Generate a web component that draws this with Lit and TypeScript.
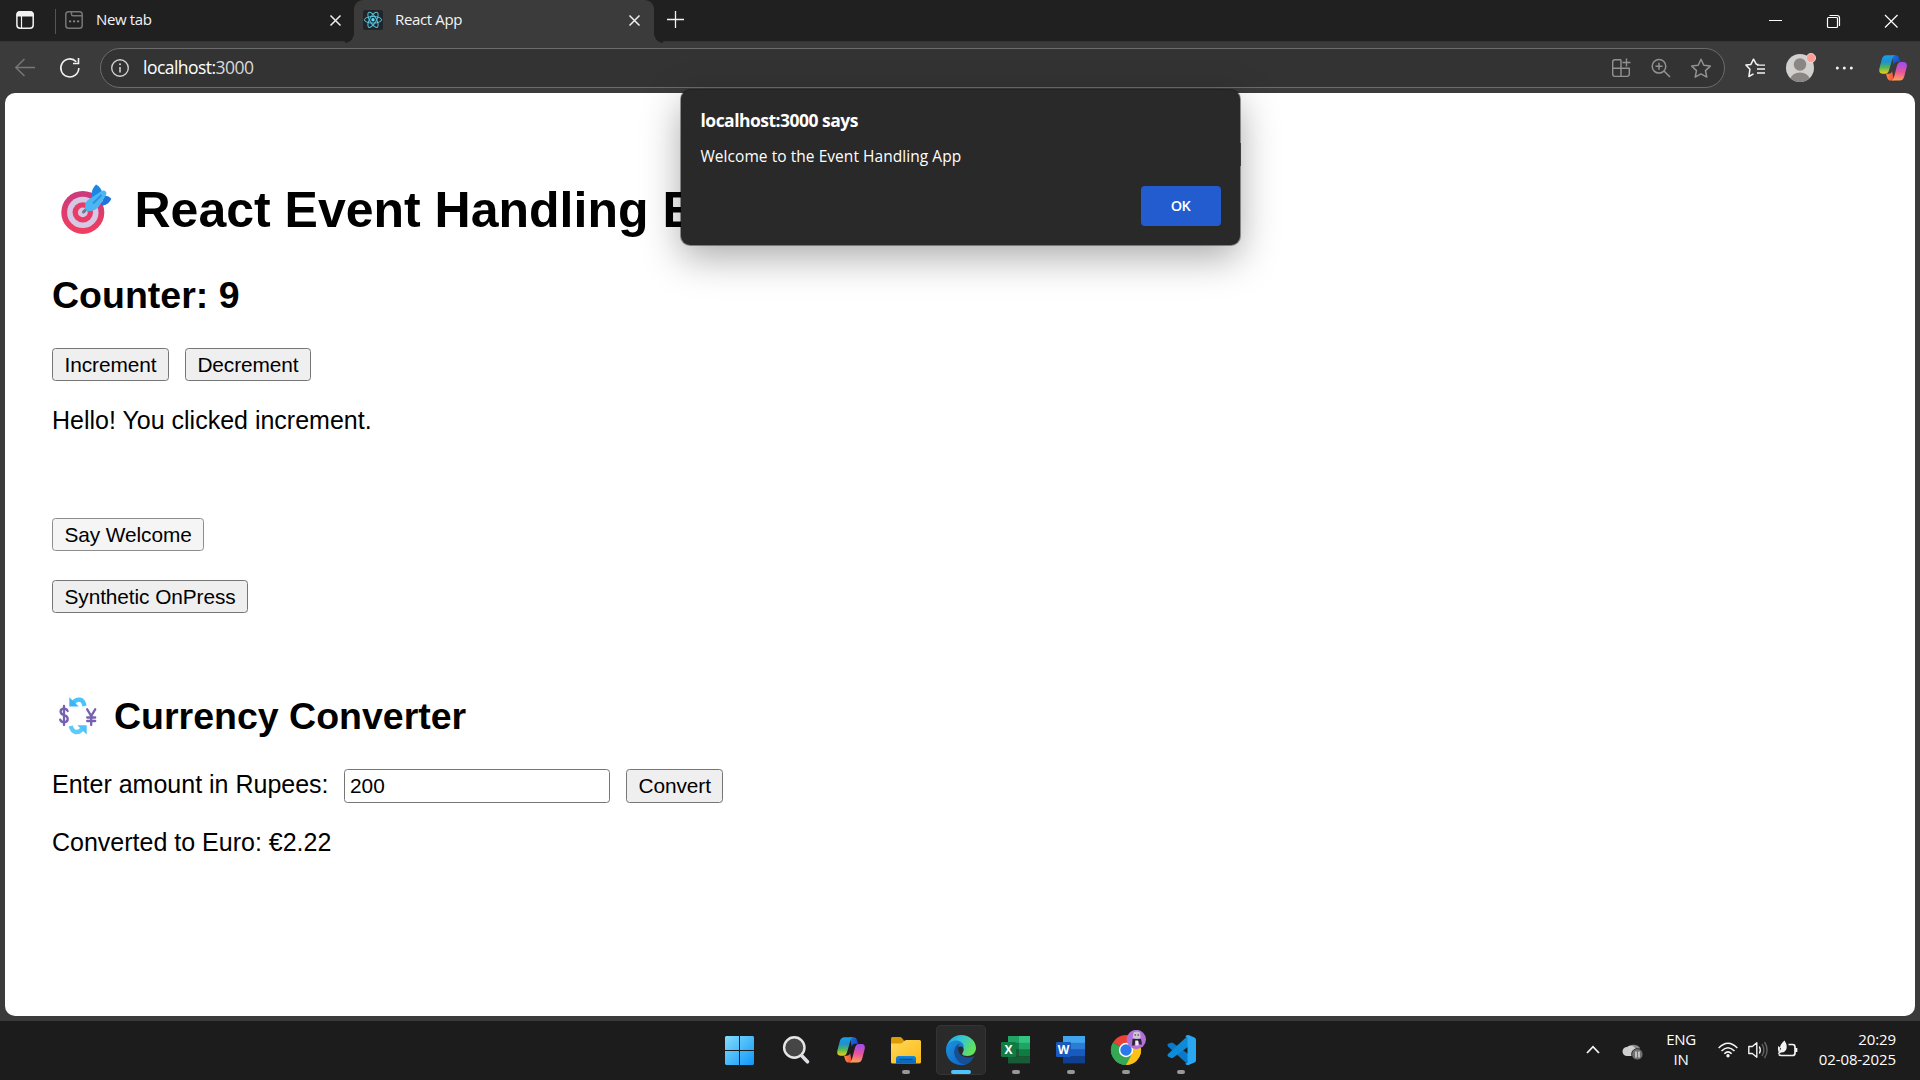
import { LitElement, html, svg, css } from "lit";
import { customElement, state } from "lit/decorators.js";

type Box = [number, number, number, number];

/* Icons are drawn in window coordinates; the box is the part of the window they cover. */
const icon = (b: Box, body: unknown, cls = "") =>
  html`<svg class="ico ${cls}" width=${b[2]} height=${b[3]} viewBox=${b.join(" ")} fill="none">${body}</svg>`;

/* Ribbon mark in a 28x26 box. */
const copilot = (id: string) => svg`
  <defs>
    <linearGradient id="${id}a" x1="0" y1="0" x2="0" y2="1"><stop offset="0" stop-color="#1a9fe8"/><stop offset=".35" stop-color="#1f8fd0"/><stop offset=".65" stop-color="#4fb75c"/><stop offset="1" stop-color="#f5cc16"/></linearGradient>
    <linearGradient id="${id}b" x1=".3" y1="0" x2=".2" y2="1"><stop offset="0" stop-color="#a04df0"/><stop offset=".5" stop-color="#e8549a"/><stop offset="1" stop-color="#ffa552"/></linearGradient>
    <linearGradient id="${id}c" x1="0" y1="0" x2="1" y2="1"><stop offset="0" stop-color="#1a74dd"/><stop offset="1" stop-color="#1b3fc4"/></linearGradient>
    <linearGradient id="${id}d" x1="0" y1="0" x2="1" y2="0"><stop offset="0" stop-color="#ff8a3c"/><stop offset="1" stop-color="#ee4c42"/></linearGradient>
  </defs>
  <path fill="url(#${id}c)" d="M13 .3h3.4c2.2 0 3 1 3.7 3.1l1 3.4h-2.8c-2 0-3 1-3.6 3z"/>
  <path fill="url(#${id}d)" d="M15 25.6h-3c-2.400 0-3.300-1.200-3.900-3.200L7 18.800h2.600c2 0 3-1 3.500-2.800z"/>
  <path fill="url(#${id}a)" d="M7.600.3h8.600c-1.600.2-2.300 1.700-2.900 3.600l-3.200 11.200c-.8 2.700-1.800 3.700-4 3.700H3.800C.8 18.800-.3 16.800.4 13.600L2.600 5C3.500 1.800 4.800.3 7.600.3z"/>
  <path fill="url(#${id}b)" d="M20.500 25.600h-8.300c1.600-.2 2.200-1.700 2.800-3.600l3-11.200c.8-2.700 1.700-3.900 3.900-3.900h2.400c3 0 4.100 2 3.400 5.100l-2.300 9c-.8 3.100-2.100 4.600-4.900 4.600z"/>`;

@customElement("browser-tabs")
export class BrowserTabs extends LitElement {
  static styles = css`
    :host { display: flex; height: 42px; background: #202020; border-bottom: 1px solid #343434; box-sizing: border-box; color: #f4f4f4; font: 15px/20px "Open Sans", "Noto Sans", sans-serif; }
    .ico { display: block; flex: none; }
    .lead { display: flex; align-items: flex-start; padding: 9px 0 0 14px; width: 55px; box-sizing: border-box; }
    .divider { width: 1px; height: 25px; margin-top: 9px; background: #555; flex: none; }
    .tab { display: flex; align-items: flex-start; box-sizing: border-box; padding-top: 9px; height: 43px; }
    .idle { width: 298px; padding-left: 8px; }
    .active { width: 300px; padding-left: 8px; background: #3b3b3b; border-radius: 9px 9px 0 0; position: relative; }
    .active::before, .active::after { content: ""; position: absolute; bottom: 0; width: 9px; height: 9px; }
    .active::before { left: -9px; background: radial-gradient(circle at 0 0, #202020 8.5px, #3b3b3b 9px); }
    .active::after { right: -9px; background: radial-gradient(circle at 100% 0, #202020 8.5px, #3b3b3b 9px); }
    .label { flex: 1; padding-left: 12px; letter-spacing: -0.35px; white-space: nowrap; }
    .active .label { padding-left: 11px; }
    .controls { display: flex; margin-left: auto; padding: 13px 20px 0 0; gap: 42px; }
    .x { margin: 5px 12px 0 0; }
    .active .x { margin-right: 13px; }
    .plus { margin: 10px 0 0 12px; }
  `;
  render() {
    const x = svg`<path d="M1.500 1.500l10 10M11.500 1.500l-10 10" stroke="#f0f0f0" stroke-width="1.500"/>`;
    return html`
      <div class="lead">${icon([14, 9, 22, 22], svg`
        <rect x="16.900" y="11.800" width="16.300" height="16.400" rx="3.200" stroke="#f2f2f2" stroke-width="1.500"/>
        <path d="M16.500 16.500v-1.600a3.600 3.600 0 0 1 3.600-3.600h10a3.600 3.600 0 0 1 3.600 3.600v1.600z" fill="#f2f2f2"/><path d="M21.500 16v12" stroke="#f2f2f2" stroke-width="1.200"/>`)}</div>
      <div class="divider"></div>
      <div class="tab idle">
        ${icon([64, 9, 20, 22], svg`<g stroke="#777" stroke-width="1.500"><rect x="65.800" y="11.800" width="16.400" height="16.400" rx="2.800"/><path d="M71.500 12v2.200q0 1.600 1.600 1.600H82"/></g><path d="M69 20.500h2.200v1.800H69zM73 20.500h2.200v1.800H73zM77 20.500h2.200v1.800H77z" fill="#888"/>`)}
        <span class="label">New tab</span>
        ${icon([0, 0, 13, 13], x, "x")}
      </div>
      <div class="tab active">
        ${icon([362, 9, 22, 22], svg`<rect x="363" y="10" width="20" height="20" rx="2" fill="#20252a"/>
          <g stroke="#58c4dc" stroke-width="1"><ellipse cx="373" cy="19.800" rx="8.600" ry="3.300"/><ellipse cx="373" cy="19.800" rx="8.600" ry="3.300" transform="rotate(60 373 19.800)"/><ellipse cx="373" cy="19.800" rx="8.600" ry="3.300" transform="rotate(120 373 19.800)"/></g><circle cx="373" cy="19.800" r="1.700" fill="#61dafb"/>`)}
        <span class="label">React App</span>
        ${icon([0, 0, 13, 13], x, "x")}
      </div>
      ${icon([666, 10, 20, 20], svg`<path d="M667 19.500h17M675.500 11v17" stroke="#f2f2f2" stroke-width="1.300"/>`, "plus")}
      <div class="controls">
        ${icon([1768, 13, 16, 17], svg`<path d="M1769 20.500h13" stroke="#fff"/>`)}
        ${icon([1826, 13, 16, 17], svg`<g stroke="#fff" stroke-width="1.200"><rect x="1827.500" y="17.500" width="10" height="10" rx="1"/><path d="M1829.500 15.500h7.500q2.500 0 2.500 2.500v8"/></g>`)}
        ${icon([1884, 13, 16, 17], svg`<path d="M1885 15l12.500 12.500M1897.500 15L1885 27.500" stroke="#fff" stroke-width="1.200"/>`)}
      </div>`;
  }
}

@customElement("browser-toolbar")
export class BrowserToolbar extends LitElement {
  static styles = css`
    :host { display: flex; align-items: center; height: 51px; box-sizing: border-box; background: #3b3b3b; padding: 0 13px 0 14px; }
    .ico { display: block; flex: none; }
    .reload { margin-left: 22px; }
    .address { display: flex; align-items: center; box-sizing: border-box; width: 1625px; height: 40px; margin-left: 18px; padding: 0 12px 0 9px; background: #333; border: 1px solid #6c6c6c; border-radius: 20px; flex: none; }
    .url { flex: 1; padding: 0 0 1px 13px; color: #fff; font: 17.5px/24px "Open Sans", "Noto Sans", sans-serif; letter-spacing: -0.53px; }
    .port { color: #d8d8d8; }
    .actions { display: flex; gap: 18px; }
    .tools { display: flex; align-items: center; margin-left: auto; }
    .me { margin-left: 17px; }
    .more { margin-left: 18px; }
    .mark { margin-left: 24px; }
  `;
  render() {
    const star = "l2.800 6 6.500.8-4.800 4.500 1.300 6.500-5.800-3.200-5.800 3.200 1.300-6.500-4.800-4.500 6.500-.8z";
    return html`
      ${icon([14, 58, 22, 20], svg`<path d="M35 67.500H16M24.500 59l-8.700 8.500 8.700 8.500" stroke="#777" stroke-width="1.500"/>`)}
      ${icon([58, 57, 24, 22], svg`<path d="M78.800 68a9 9 0 1 1-2.500-6.300M78.500 58v5.500H73" stroke="#f2f2f2" stroke-width="1.600"/>`, "reload")}
      <div class="address">
        ${icon([110, 58, 20, 20], svg`<circle cx="120" cy="68" r="8.300" stroke="#cfcfcf" stroke-width="1.400"/><path d="M120 67v5.500" stroke="#cfcfcf" stroke-width="1.600"/><circle cx="120" cy="64.300" r="1" fill="#cfcfcf"/>`)}
        <span class="url">localhost:<span class="port">3000</span></span>
        <div class="actions">
          ${icon([1610, 57, 22, 22], svg`<g stroke="#929292" stroke-width="1.400"><path d="M1621 59.800h-6q-2.300 0-2.300 2.300v12q0 2.300 2.300 2.300h12q2.300 0 2.300-2.300v-5.800h-16.500M1621 59.800v16.500M1626.500 58.500v8M1622.500 62.500h8"/></g>`)}
          ${icon([1650, 57, 22, 22], svg`<g stroke="#929292" stroke-width="1.500"><circle cx="1659" cy="66.300" r="6.800"/><path d="M1664 71l6 6M1655.500 66.300h7M1659 62.800v7"/></g>`)}
          ${icon([1690, 57, 22, 22], svg`<path d="M1701 59.300${star}" stroke="#929292" stroke-width="1.500" stroke-linejoin="round"/>`)}
        </div>
      </div>
      <div class="tools">
        ${icon([1744, 57, 22, 22], svg`<g stroke="#f4f4f4" stroke-width="1.500" stroke-linejoin="round"><path d="M1758.500 64.500l-2.200-.3-2.800-5-2.600 5.200-5 .7 4 4.200-1 7.200 4.600-2.600"/><path d="M1757 65.200h8M1757 69h8M1757 73h8" stroke-width="1.300"/></g>`)}
        ${icon([1783, 52, 34, 32], svg`<clipPath id="face"><circle cx="1800" cy="68" r="14"/></clipPath><circle cx="1800" cy="68" r="14" fill="#d2d0ce"/><g clip-path="url(#face)" fill="#8a8684"><circle cx="1800" cy="64.500" r="6.200"/><ellipse cx="1800" cy="79.500" rx="9.500" ry="7"/></g><circle cx="1811" cy="58" r="4.600" fill="#ff9e96" stroke="#e6e2df" stroke-width=".8"/>`, "me")}
        ${icon([1836, 62, 20, 12], svg`<g fill="#f2f2f2"><circle cx="1838.300" cy="68" r="1.500"/><circle cx="1845.300" cy="68" r="1.500"/><circle cx="1852.300" cy="68" r="1.500"/></g>`, "more")}
        ${icon([0, 0, 28, 26], copilot("t"), "mark")}
      </div>`;
  }
}

@customElement("event-page")
export class EventPage extends LitElement {
  @state() private count = 9;
  @state() private amount = "200";
  static styles = css`
    :host { display: block; box-sizing: border-box; height: 100%; padding: 84px 47px 0; background: #fff; color: #000; font: 25px/28px "Liberation Sans", Arial, sans-serif; }
    .ico { display: block; flex: none; }
    h1, h2, p { margin: 0; }
    h1 { display: flex; height: 66px; font-size: 50px; line-height: 66px; white-space: nowrap; }
    h2 { margin-top: 31px; font-size: 37.5px; line-height: 43px; }
    .currency { display: flex; margin-top: 78px; height: 50px; line-height: 50px; }
    .row { display: flex; gap: 16px; margin-top: 31px; }
    p { margin-top: 25px; }
    button { box-sizing: border-box; height: 33px; padding: 0 11.500px; background: #efefef; border: 1px solid #767676; border-radius: 3.500px; color: #000; font: 20.830px/24px "Liberation Sans", Arial, sans-serif; letter-spacing: -0.08px; white-space: nowrap; }
    .hot { display: block; margin-top: 84px; background: #f5f5f5; border-color: #8d8d8d; }
    .press { display: block; margin-top: 29px; }
    .convert { margin-top: 28px; height: 34px; }
    .convert button { height: 34px; }
    input { box-sizing: border-box; width: 266px; height: 34px; padding: 0 5px; border: 1px solid #767676; border-radius: 3.500px; background: #fff; color: #000; font: 20.830px/24px "Liberation Sans", Arial, sans-serif; }
    label { line-height: 30px; width: 276px; flex: none; white-space: nowrap; }
  `;
  render() {
    return html`
      <h1>${icon([52, 177, 82.5, 66], svg`
        <defs><linearGradient id="tg" x1="0" y1="0" x2="0" y2="1"><stop offset="0" stop-color="#c93a7e"/><stop offset="1" stop-color="#f23e5e"/></linearGradient></defs>
        <circle cx="82.800" cy="212.400" r="21.500" fill="url(#tg)"/><circle cx="82.800" cy="212.400" r="15.700" fill="#d5c8e4"/><circle cx="82.800" cy="212.400" r="10.200" fill="#ea3a66"/><circle cx="82.800" cy="212.400" r="4.900" fill="#d5c8e4"/>
        <path d="M83.500 212l4-4" stroke="#7a6f86" stroke-width="3" stroke-linecap="round"/>
        <path d="M91.500 198c-.5-5 .8-10 4.500-13.500 3.500 1.500 5.500 5 6.500 9l-4 5z" fill="#1d86e2"/><path d="M101 205.500c4.500.3 8.500-2.500 10.300-6.800-2-2.300-5-3.300-7.300-2.700z" fill="#1c74dc"/>
        <path d="M85.500 209.500c-.8-4-.3-7.500 2.500-9.500l12-8q3.500-2.500 5.500-.8 1.800 2 0 4.800l-6 9.500c-3 4.500-8 6-12 5.700q-1.700-.3-2-1.700z" fill="#4bb6f2"/><path d="M93.500 203l7.500-7.500" stroke="#2c8fe4" stroke-width="1.800" stroke-linecap="round"/>`)}React Event Handling Example</h1>
      <h2>Counter: ${this.count}</h2>
      <div class="row"><button @click=${() => this.count++}>Increment</button><button @click=${() => this.count--}>Decrement</button></div>
      <p>Hello! You clicked increment.</p>
      <button class="hot">Say Welcome</button>
      <button class="press">Synthetic OnPress</button>
      <h2 class="currency">${icon([52, 691, 62, 50], svg`
        <g stroke="#7660b0" stroke-width="2.300" stroke-linecap="round"><path d="M67.600 711q-.8-2.400-3.600-2.400-3.400 0-3.400 3 0 2.600 3.400 3.600 3.700 1 3.700 3.900 0 3.200-3.700 3.200-3 0-3.800-2.600M64 706v19"/><path d="M87.200 709.300l4 6.700 4-6.700M91.200 716v9M87.200 717.500h8M87.200 721h8"/></g>
        <path d="M73 703q3-3.800 6.800-3.300 3.600.7 4.700 6.300" stroke="#4cc3fa" stroke-width="4.400"/><path d="M69.300 697.300v9.200h9.400z" fill="#3db4f5"/>
        <path d="M82.500 728.700q-3 3.800-6.800 3.300-3.600-.7-5-6" stroke="#5ccbfa" stroke-width="4.400"/><path d="M86.700 734.500v-9.200h-9.400z" fill="#4cc3fa"/>`)}Currency Converter</h2>
      <div class="row convert"><label for="amt">Enter amount in Rupees:</label>
        <input id="amt" .value=${this.amount} @input=${(e: Event) => (this.amount = (e.target as HTMLInputElement).value)} />
        <button>Convert</button></div>
      <p>Converted to Euro: €${(Number(this.amount) * 0.0111).toFixed(2)}</p>`;
  }
}

@customElement("alert-dialog")
export class AlertDialog extends LitElement {
  static styles = css`
    :host { position: absolute; left: 680.500px; top: 90px; width: 559.500px; height: 155px; box-sizing: border-box; padding: 18px 19.500px 0 20px; display: flex; flex-direction: column; background: #292929; border-radius: 9px; color: #fff; box-shadow: 0 0 0 1px rgba(0, 0, 0, 0.38), 0 12px 38px rgba(0, 0, 0, 0.34); font: 15.500px/20px "Open Sans", "Noto Sans", sans-serif; }
    .title { font-size: 17.500px; font-weight: 700; line-height: 24px; letter-spacing: -0.52px; }
    .msg { margin-top: 14px; letter-spacing: 0.05px; }
    .ok { align-self: flex-end; width: 80px; height: 40px; margin-top: 20px; border: 0; border-radius: 4px; background: #235ccf; color: #fff; font: 600 14.500px/20px "Open Sans", "Noto Sans", sans-serif; letter-spacing: -0.5px; }
  `;
  render() {
    return html`<div class="title">localhost:3000 says</div><div class="msg">Welcome to the Event Handling App</div><button class="ok">OK</button>`;
  }
}

@customElement("task-bar")
export class TaskBar extends LitElement {
  static styles = css`
    :host { display: grid; grid-template-columns: 716px auto 1fr; height: 59px; box-sizing: border-box; background: #1c1c1c; color: #fff; padding-top: 4px; font: 15px/20px "Open Sans", "Noto Sans", sans-serif; }
    .ico { display: block; flex: none; }
    .apps { grid-column: 2; display: flex; gap: 5px; }
    .app { width: 50px; height: 50px; box-sizing: border-box; display: flex; flex-direction: column; align-items: center; padding-top: 5px; border-radius: 5px; }
    .current { background: #2a2a2a; box-shadow: inset 0 0 0 1px #343434; }
    .dot { width: 8px; height: 4px; border-radius: 2px; background: #979797; margin-top: 2px; }
    .current .dot { width: 20px; background: #4cc2ff; }
    .tray { display: flex; justify-content: flex-end; padding: 0 24px 0 0; }
    .tray .ico { margin-top: 10px; }
    .lang { width: 50px; margin: 4px 10px 0 13px; text-align: center; letter-spacing: -0.3px; }
    .clock { width: 94px; margin: 4px 0 0 4px; text-align: right; white-space: nowrap; letter-spacing: -0.1px; }
  `;
  private app(cx: number, body: unknown, running = true, current = false) {
    return html`<div class="app ${current ? "current" : ""}">${icon([cx - 20, 1030, 40, 38], body)}${running ? html`<span class="dot"></span>` : ""}</div>`;
  }
  render() {
    return html`
      <div class="apps">
        ${this.app(741, svg`<defs><linearGradient id="w" gradientUnits="userSpaceOnUse" x1="725" y1="1036" x2="754" y2="1065"><stop stop-color="#84dcfb"/><stop offset="1" stop-color="#0e97f8"/></linearGradient></defs>
          <path fill="url(#w)" d="M726 1036h13v14h-14v-13zM740 1036h13l1 1v13h-14zM725 1051h14v14h-13l-1-1zM740 1051h14v13l-1 1h-13z"/>`, false)}
        ${this.app(796, svg`<circle cx="794.300" cy="1047.500" r="10.200" fill="#464646" stroke="#e6e6e8" stroke-width="2.400"/><path d="M802 1056l5.500 5.800" stroke="#dddfe4" stroke-width="3.600" stroke-linecap="round"/>`, false)}
        ${this.app(851, svg`<g transform="translate(837 1037)">${copilot("b")}</g>`, false)}
        ${this.app(906, svg`<defs><linearGradient id="fo" x1="0" y1="0" x2="1" y2="1"><stop stop-color="#ffd95a"/><stop offset="1" stop-color="#fbb916"/></linearGradient><linearGradient id="fb" x1="0" y1="0" x2="0" y2="1"><stop stop-color="#1487dc"/><stop offset="1" stop-color="#0a62b4"/></linearGradient></defs>
          <path d="M891 1046v-7.500q0-1.500 1.500-1.500h7.500q1 0 1.700.8l2.300 2.700v3.500z" fill="#dd9b05"/><path d="M891 1043.500h9.500q1 0 1.700-.6l2.500-2.300q.8-.6 1.800-.6h13q1.500 0 1.500 1.500V1062q0 1.500-1.500 1.500h-27q-1.500 0-1.500-1.500z" fill="url(#fo)"/>
          <path d="M896 1063.500v-5q0-2.500 2.500-2.500h15q2.500 0 2.500 2.500v5z" fill="url(#fb)"/><path d="M899.500 1059.500h13" stroke="#084f91" stroke-width="1.300"/>`)}
        ${this.app(961, svg`<defs><linearGradient id="e1" x1="0" y1="0" x2="1" y2=".4"><stop stop-color="#1fa2e6"/><stop offset=".5" stop-color="#34c6d4"/><stop offset="1" stop-color="#63e05d"/></linearGradient><linearGradient id="e2" x1="0" y1="0" x2="1" y2="1"><stop stop-color="#1e92e2"/><stop offset="1" stop-color="#0a63c4"/></linearGradient></defs>
          <path d="M946.500 1047c1.500-7 7.500-12 14.500-12 8.500 0 15 6 15 13 0 5-4 8-8.500 8-3 0-5.300-1-5.300-2.300 0-1 1.500-1.600 1.500-4.200 0-3.500-3.500-6.500-8-6.500-4 0-7.500 1.500-9.200 4z" fill="url(#e1)"/>
          <path d="M946 1050c0-6 4.500-9.500 9.700-9.500 4.300 0 8 2.500 8 6.500-6.500-2-9.200 1.500-9.200 5.500 0 6 6 11 12 12q-2.500.7-5.500.5c-8.500 0-15-6.500-15-15z" fill="url(#e2)"/>
          <path d="M954.500 1051c0-3.500 2-6.500 5.500-7.200-1.600 2-2.200 4-1.800 6.500.8 4.500 5 7.200 10 7.200 2.500 0 4.500-.6 6-1.500-2 5-6 8.800-9.700 8.300-6-.8-10-6-10-13.300z" fill="#174f96"/>`, true, true)}
        ${this.app(1016, this.office(1001, ["#21a366", "#33c481", "#107c41", "#21a366", "#185c37", "#107c41", "#185c37", "#185c37"], "#107c41", "X"))}
        ${this.app(1071, this.office(1056, ["#41a5ee", "#41a5ee", "#2b7cd3", "#2b7cd3", "#185abd", "#185abd", "#103f91", "#103f91"], "#185abd", "W"))}
        ${this.app(1126, svg`<path d="M1126 1050L1113 1042.500A15 15 0 0 1 1139 1042.500z" fill="#ea4335"/><path d="M1126 1050L1139 1042.500A15 15 0 0 1 1126 1065z" fill="#fbc116"/><path d="M1126 1050V1065A15 15 0 0 1 1113 1042.500z" fill="#34a853"/>
          <path d="M1126 1043h13.300q1.700 3.500 1.700 7a15 15 0 0 1-15 15l6.200-11.300z" fill="#fbc116"/><path d="M1120 1053.500l-7-11A15 15 0 0 0 1126 1065l6-11z" fill="#34a853"/><circle cx="1126" cy="1050" r="7.200" fill="#fff"/><circle cx="1126" cy="1050" r="5.700" fill="#2a78ea"/>
          <circle cx="1136.300" cy="1039.500" r="9.700" fill="#b16fd8"/><path d="M1133.500 1032.500q3.300-1.800 6.500 0l.8 5q-4 2.500-8 0z" fill="#c9c9cd"/><path d="M1134.500 1035h1.500M1137.500 1035h1.500" stroke="#29252e"/><path d="M1132.500 1039h8.500l1 5.500h-2.500l-1-3.500h-3l-1 4.500h-2.500z" fill="#29252e"/><path d="M1135.300 1040.500h2.700l.5 5h-3z" fill="#eee"/>`)}
        ${this.app(1181, svg`<path d="M1168 1043.800q-1.300 1.200 0 2.600l18.500 16.800 3.500-8-17-12.200q-1.200-.9-2.300 0z" fill="#0a79c9"/><path d="M1168 1056.600q-1.300-1.200 0-2.600l19-17.500 3 9-17 12.300q-1.200.9-2.300 0z" fill="#0f8ad6"/><path d="M1188.500 1035l6 2.600q1.500.7 1.500 2.300v20.400q0 1.600-1.500 2.300l-6 2.400q-2 .5-3.500-1.500 2.500.5 2.500-2.500v-22q0-3-2.500-2.500 1.500-2 3.500-1.500z" fill="#2aa7f2"/>`)}
      </div>
      <div class="tray">
        ${icon([1580, 1035, 26, 30], svg`<path d="M1587 1053l6-6.300 6 6.300" stroke="#f4f4f4" stroke-width="1.800"/>`)}
        ${icon([1606, 1035, 37, 30], svg`<path d="M1626 1049a8 7 0 0 1 14-1l-5 8h-8z" fill="#8c8c8c"/><path d="M1627 1056a4.500 4.500 0 0 1 0-9q5-3 8 1l4 3v5z" fill="#cfcfcf"/><circle cx="1637.300" cy="1054.300" r="5.700" fill="#717171" stroke="#1c1c1c" stroke-width=".8"/><path d="M1636 1051.500v6M1639 1051.500v6" stroke="#f2f2f2" stroke-width="1.200"/>`)}
        <div class="lang">ENG<br />IN</div>
        ${icon([1716, 1035, 82, 30], svg`<g stroke="#f4f4f4" stroke-width="1.600"><path d="M1718.700 1048q9.300-9.500 18.600 0M1721.500 1051q6.500-6.500 13 0M1724.300 1053.800q3.700-3.700 7.400 0"/></g><circle cx="1728" cy="1055.700" r="1.700" fill="#f4f4f4"/>
          <path d="M1748.800 1046.500h3.500l4.500-3.700v14.400l-4.500-3.700h-3.500z" stroke="#f4f4f4" stroke-width="1.400" stroke-linejoin="round"/><path d="M1759.300 1046.500q2 3.500 0 7" stroke="#f4f4f4" stroke-width="1.400"/><path d="M1762 1044q3.800 6 0 12M1764.500 1042q5.200 8 0 16" stroke="#626262" stroke-width="1.400"/>
          <path d="M1788.500 1044.500h4q2.500 0 2.500 2.500v6q0 2.500-2.500 2.500h-11q-1.800 0-2.500-1M1796.500 1048v4" stroke="#f4f4f4" stroke-width="1.700"/><path d="M1784.500 1040.500q3.500 5 1.500 9.500-2 3-5 2.500l-2.500 2-.5-1.500 2-2q-1-6 4.500-10.500zM1778.300 1046q-1 4 .7 6.500l2-4z" fill="#f4f4f4"/>`)}
        <div class="clock">20:29<br />02-08-2025</div>
      </div>`;
  }
  private office(x: number, c: string[], front: string, letter: string) {
    return svg`${c.map((f, i) => svg`<rect x=${x + 7 + (i % 2) * 11} y=${1036 + Math.floor(i / 2) * 6.8} width="11" height="7" fill=${f}/>`)}
      <rect x=${x} y="1042" width="15" height="15" rx="1.300" fill=${front}/>
      <text x=${x + 7.5} y="1054" text-anchor="middle" fill="#fff" font-family="Open Sans, sans-serif" font-weight="700" font-size="12">${letter}</text>`;
  }
}

@customElement("app-root")
export class AppRoot extends LitElement {
  static styles = css`
    :host { display: flex; flex-direction: column; width: 1920px; height: 1080px; overflow: hidden; position: relative; background: #3b3b3b; }
    .frame { flex: 1; min-height: 0; padding: 0 5px 5.500px; }
    .page { height: 100%; border-radius: 10px; overflow: hidden; }
    .edge { position: absolute; left: 1240px; top: 143px; width: 1px; height: 23px; background: #3b3b3b; }
  `;
  render() {
    return html`<browser-tabs></browser-tabs><browser-toolbar></browser-toolbar>
      <div class="frame"><div class="page"><event-page></event-page></div></div>
      <task-bar></task-bar><alert-dialog></alert-dialog><div class="edge"></div>`;
  }
}
